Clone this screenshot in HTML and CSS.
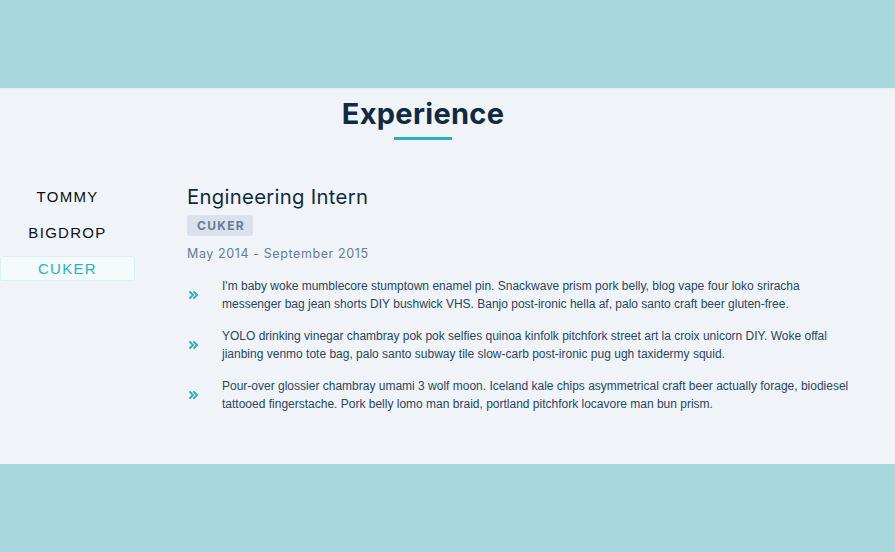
FILE: index.html
```html
<!DOCTYPE html>
<html lang="en">
<head>
<meta charset="utf-8">
<title>Experience</title>
<link rel="stylesheet" href="styles.css">
</head>
<body>
<div class="band"></div>
<section class="experience">
  <h2 class="title">Experience</h2>
  <div class="title-line"></div>
  <div class="jobs">
    <nav class="tabs">
      <button class="tab">TOMMY</button>
      <button class="tab">BIGDROP</button>
      <button class="tab active">CUKER</button>
    </nav>
    <article class="job">
      <h3 class="job-title">Engineering Intern</h3>
      <span class="company">CUKER</span>
      <p class="dates">May 2014 - September 2015</p>
      <ul class="duties">
        <li class="duty">
          <svg class="chev" viewBox="0 0 10 8"><path d="M1 1l3 3-3 3M5 1l3 3-3 3" fill="none" stroke="#2cb1bc" stroke-width="1.9" stroke-linecap="round" stroke-linejoin="round"/></svg>
          <p>I'm baby woke mumblecore stumptown enamel pin. Snackwave prism pork belly, blog vape four loko sriracha messenger bag jean shorts DIY bushwick VHS. Banjo post-ironic hella af, palo santo craft beer gluten-free.</p>
        </li>
        <li class="duty">
          <svg class="chev" viewBox="0 0 10 8"><path d="M1 1l3 3-3 3M5 1l3 3-3 3" fill="none" stroke="#2cb1bc" stroke-width="1.9" stroke-linecap="round" stroke-linejoin="round"/></svg>
          <p>YOLO drinking vinegar chambray pok pok selfies quinoa kinfolk pitchfork street art la croix unicorn DIY. Woke offal jianbing venmo tote bag, palo santo subway tile slow-carb post-ironic pug ugh taxidermy squid.</p>
        </li>
        <li class="duty">
          <svg class="chev" viewBox="0 0 10 8"><path d="M1 1l3 3-3 3M5 1l3 3-3 3" fill="none" stroke="#2cb1bc" stroke-width="1.9" stroke-linecap="round" stroke-linejoin="round"/></svg>
          <p>Pour-over glossier chambray umami 3 wolf moon. Iceland kale chips asymmetrical craft beer actually forage, biodiesel tattooed fingerstache. Pork belly lomo man braid, portland pitchfork locavore man bun prism.</p>
        </li>
      </ul>
    </article>
  </div>
</section>
<div class="band"></div>
</body>
</html>
```

FILE: styles.css
```css
* { box-sizing: border-box; }
html, body { margin: 0; padding: 0; }
body {
  background: #a8d8de;
  font-family: "Liberation Sans", Arial, sans-serif;
  width: 895px;
  height: 552px;
  overflow: hidden;
}
.band { height: 88px; background: #a8d8de; }
.experience {
  height: 376px;
  background: #f0f4f8;
  border-top: 1px solid #e6f2f5;
  padding-top: 7px;
}
.title {
  margin: 0;
  width: 846px;
  text-align: center;
  font-family: Inter, "Liberation Sans", sans-serif;
  font-weight: 700;
  font-size: 29px;
  letter-spacing: 0.3px;
  line-height: 36px;
  color: #102a43;
}
.title-line {
  width: 58px;
  height: 3px;
  background: #2cb1bc;
  margin: 5px 0 0 394px;
}
.jobs {
  display: flex;
  margin-top: 44px;
  gap: 52px;
}
.tabs {
  width: 135px;
  display: flex;
  flex-direction: column;
  gap: 11px;
}
.tab {
  background: transparent;
  border: 1px solid transparent;
  border-radius: 3px;
  font-family: "Liberation Sans", Arial, sans-serif;
  font-size: 15px;
  letter-spacing: 1.3px;
  line-height: 21px;
  color: #0b0f14;
  padding: 1px 0;
  text-align: center;
  cursor: pointer;
}
.tab.active {
  color: #2cb1bc;
  border-color: #d8f3f6;
  background: #f4f9fb;
}
.job { flex: 1; padding-right: 30px; padding-top: 1px; }
.job-title {
  margin: 0;
  font-family: Inter, "Liberation Sans", sans-serif;
  font-weight: 400;
  font-size: 20.3px;
  letter-spacing: 0.3px;
  line-height: 24px;
  color: #102a43;
}
.company {
  display: inline-block;
  margin-top: 6px;
  background: #d9e2ec;
  color: #627d98;
  font-family: Inter, "Liberation Sans", sans-serif;
  font-weight: 700;
  font-size: 12px;
  letter-spacing: 1.3px;
  line-height: 21px;
  padding: 0 8px 0 10px;
  border-radius: 3px;
}
.dates {
  margin: 9px 0 0;
  font-family: Inter, "Liberation Sans", sans-serif;
  font-size: 12.5px;
  letter-spacing: 0.6px;
  line-height: 18px;
  color: #627d98;
}
.duties { list-style: none; margin: 14px 0 0; padding: 0; }
.duty {
  display: flex;
  align-items: center;
  gap: 23px;
  margin-bottom: 14px;
}
.chev { width: 10px; height: 8px; flex: none; margin-left: 2px; }
.duty p {
  margin: 0;
  width: 636px;
  font-family: "Liberation Sans", Arial, sans-serif;
  font-size: 12px;
  line-height: 18px;
  color: #2a4560;
}
```
